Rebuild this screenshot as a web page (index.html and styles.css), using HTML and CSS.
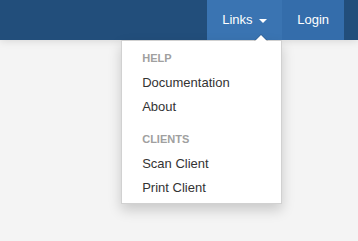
FILE: index.html
```html
<!DOCTYPE html>
<html lang="en">
<head>
    <meta charset="UTF-8">
    <meta name="viewport" content="width=device-width, initial-scale=1.0">
    <title>Links</title>
    <link rel="stylesheet" href="styles.css">
</head>
<body>

    <nav class="navbar">
        <ul class="nav">
            <li class="nav-item dropdown open">
                <a href="#" class="nav-link active">Links <span class="caret"></span></a>
                <ul class="dropdown-menu">
                    <li class="dropdown-header">Help</li>
                    <li><a href="#">Documentation</a></li>
                    <li><a href="#">About</a></li>
                    <li class="dropdown-header spaced">Clients</li>
                    <li><a href="#">Scan Client</a></li>
                    <li><a href="#">Print Client</a></li>
                </ul>
            </li>
            <li class="nav-item">
                <a href="#" class="nav-link login">Login</a>
            </li>
        </ul>
    </nav>

</body>
</html>
```

FILE: styles.css
```css
/* Global Styles */
* {
    margin: 0;
    padding: 0;
    box-sizing: border-box;
}

body {
    background-color: #f4f4f4;
    font-family: "Liberation Sans", Arial, sans-serif;
    font-size: 13px;
    color: #333;
    height: 100vh;
    overflow: hidden;
}

ul {
    list-style: none;
}

a {
    text-decoration: none;
    color: inherit;
}

/* Navbar */
.navbar {
    height: 40px;
    background-color: #224e7b;
    box-shadow: 0 1px 8px rgba(0, 0, 0, 0.12);
    position: relative;
    z-index: 1;
}

.nav {
    display: flex;
    justify-content: flex-end;
    height: 100%;
    padding-right: 14px;
}

.nav-item {
    position: relative;
}

.nav-link {
    display: block;
    padding: 10px 15px;
    line-height: 20px;
    color: #fff;
    background-color: #346dab;
}

.nav-link.active {
    background-color: #3a74b2;
}

.caret {
    display: inline-block;
    width: 0;
    height: 0;
    margin-left: 3px;
    vertical-align: middle;
    border-top: 4px solid #fff;
    border-left: 4px solid transparent;
    border-right: 4px solid transparent;
}

/* Dropdown */
.dropdown-menu {
    position: absolute;
    top: 100%;
    right: 0;
    width: 161px;
    padding: 0 0 3px;
    background-color: #fff;
    border: 1px solid rgba(0, 0, 0, 0.18);
    box-shadow: 0 6px 12px rgba(0, 0, 0, 0.175);
}

.dropdown-menu::before,
.dropdown-menu::after {
    content: "";
    position: absolute;
    border-left: 6px solid transparent;
    border-right: 6px solid transparent;
}

.dropdown-menu::before {
    top: -7px;
    right: 13px;
    border-left-width: 7px;
    border-right-width: 7px;
    border-bottom: 7px solid rgba(0, 0, 0, 0.18);
}

.dropdown-menu::after {
    top: -6px;
    right: 14px;
    border-bottom: 6px solid #fff;
}

.dropdown-header {
    padding: 8px 20px 4px;
    line-height: 18px;
    font-size: 11px;
    font-weight: bold;
    text-transform: uppercase;
    color: #a0a0a0;
}

.dropdown-header.spaced {
    padding-top: 11px;
}

.dropdown-menu a {
    display: block;
    padding: 3px 20px;
    line-height: 18px;
    color: #333;
    white-space: nowrap;
}
```
